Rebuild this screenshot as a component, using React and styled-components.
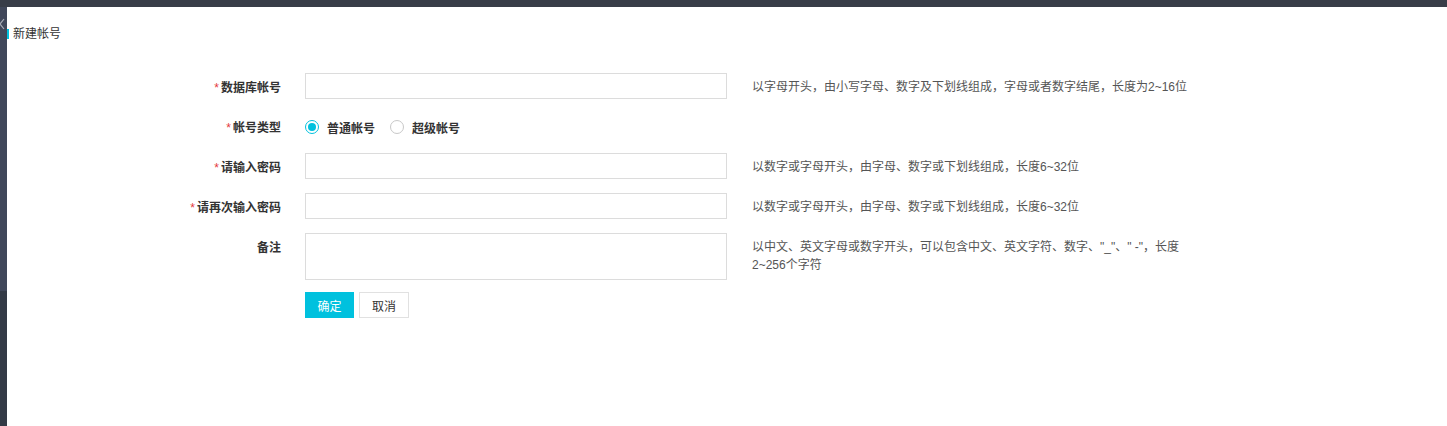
import React from "react";
import styled, { createGlobalStyle } from "styled-components";

const Global = createGlobalStyle`
  html, body { margin: 0; padding: 0; background: #fff; }
  body {
    font-family: "Liberation Sans", "Noto Sans CJK SC", sans-serif;
    font-size: 12px;
    color: #333;
  }
  * { box-sizing: border-box; }
`;

const Page = styled.div`
  width: 1447px;
  height: 426px;
  display: flex;
  flex-direction: column;
  overflow: hidden;
`;

const TopBar = styled.div`
  height: 7px;
  flex: none;
  background: #383d48;
`;

const Body = styled.div`
  flex: 1;
  display: flex;
`;

const Sidebar = styled.div`
  width: 7px;
  flex: none;
  display: flex;
  flex-direction: column;
  overflow: hidden;
`;

const SideUpper = styled.div`
  height: 284px;
  background: #40475a;
  position: relative;
  overflow: hidden;
`;

const SideLower = styled.div`
  flex: 1;
  background: #333a46;
`;

const CollapseIcon = styled.svg`
  position: absolute;
  left: -5px;
  top: 11px;
`;

const Main = styled.div`
  flex: 1;
  display: flex;
  flex-direction: column;
`;

const Title = styled.div`
  margin-top: 21px;
  height: 12px;
  display: flex;
  align-items: center;
  gap: 4px;
  font-size: 12px;
  line-height: 12px;
  color: #333;
`;

const TitleBar = styled.span`
  width: 2px;
  height: 10px;
  background: #00c1de;
`;

const Form = styled.div`
  margin-top: 33px;
  display: flex;
  flex-direction: column;
  gap: 14px;
`;

const Row = styled.div`
  display: flex;
  align-items: flex-start;
`;

const Label = styled.div`
  width: 274px;
  height: 26px;
  flex: none;
  text-align: right;
  font-weight: 700;
  color: #333;
  font-size: 12px;
  line-height: 22px;
  padding-top: 4px;
`;

const Star = styled.span`
  color: #e4393c;
  font-weight: 400;
  margin-right: 2px;
  font-size: 12px;
`;

const Control = styled.div`
  width: 422px;
  margin-left: 24px;
  flex: none;
  display: flex;
  align-items: center;
  min-height: 26px;
`;

const Input = styled.input`
  width: 100%;
  height: 26px;
  border: 1px solid #dcdcdc;
  outline: none;
  padding: 0 8px;
  font-size: 12px;
  font-family: inherit;
`;

const TextArea = styled.textarea`
  width: 100%;
  height: 47px;
  border: 1px solid #dcdcdc;
  outline: none;
  resize: none;
  padding: 4px 8px;
  font-size: 12px;
  font-family: inherit;
  display: block;
`;

const Help = styled.div`
  margin-left: 25px;
  width: 440px;
  padding-top: 5px;
  font-size: 12px;
  line-height: 18px;
  color: #555;
`;

const RadioGroup = styled.div`
  display: flex;
  align-items: center;
  height: 26px;
  padding-top: 2px;
`;

const RadioItem = styled.label`
  display: flex;
  align-items: center;
  gap: 8px;
  margin-right: 15px;
  font-weight: 700;
  color: #333;
  font-size: 12px;
`;

const RadioCircle = styled.span`
  width: 14px;
  height: 14px;
  margin-top: -1px;
  border-radius: 50%;
  border: 1px solid ${(p) => (p.$checked ? "#00c1de" : "#c8c8c8")};
  background: #fff;
  display: flex;
  align-items: center;
  justify-content: center;
  &::after {
    content: "";
    width: 8px;
    height: 8px;
    border-radius: 50%;
    background: ${(p) => (p.$checked ? "#00c1de" : "transparent")};
  }
`;

const Buttons = styled.div`
  display: flex;
  gap: 5px;
  margin-left: 298px;
  margin-top: -2px;
`;

const Button = styled.button`
  height: 26px;
  padding: 1px 0 0;
  width: ${(p) => (p.$primary ? 49 : 50)}px;
  border: 1px solid ${(p) => (p.$primary ? "#00c1de" : "#e1e1e1")};
  background: ${(p) => (p.$primary ? "#00c1de" : "#fff")};
  color: ${(p) => (p.$primary ? "#fff" : "#333")};
  font-size: 12px;
  font-family: inherit;
  cursor: pointer;
`;

const rows = [
  {
    label: "数据库帐号",
    help: "以字母开头，由小写字母、数字及下划线组成，字母或者数字结尾，长度为2~16位",
  },
  {
    label: "请输入密码",
    help: "以数字或字母开头，由字母、数字或下划线组成，长度6~32位",
  },
  {
    label: "请再次输入密码",
    help: "以数字或字母开头，由字母、数字或下划线组成，长度6~32位",
  },
];

export default function App() {
  return (
    <Page>
      <Global />
      <TopBar />
      <Body>
        <Sidebar>
          <SideUpper>
            <CollapseIcon width="10" height="12" viewBox="0 0 10 12">
              <path d="M1 1 L9 11 M9 1 L1 11" stroke="#a9adb8" strokeWidth="1.2" fill="none" />
            </CollapseIcon>
          </SideUpper>
          <SideLower />
        </Sidebar>
        <Main>
          <Title>
            <TitleBar />
            新建帐号
          </Title>
          <Form>
            <Row>
              <Label>
                <Star>*</Star>
                {rows[0].label}
              </Label>
              <Control>
                <Input />
              </Control>
              <Help>{rows[0].help}</Help>
            </Row>
            <Row>
              <Label>
                <Star>*</Star>帐号类型
              </Label>
              <Control>
                <RadioGroup>
                  <RadioItem>
                    <RadioCircle $checked />
                    普通帐号
                  </RadioItem>
                  <RadioItem>
                    <RadioCircle />
                    超级帐号
                  </RadioItem>
                </RadioGroup>
              </Control>
            </Row>
            {rows.slice(1).map((r) => (
              <Row key={r.label}>
                <Label>
                  <Star>*</Star>
                  {r.label}
                </Label>
                <Control>
                  <Input type="password" />
                </Control>
                <Help>{r.help}</Help>
              </Row>
            ))}
            <Row>
              <Label>备注</Label>
              <Control>
                <TextArea />
              </Control>
              <Help>
                以中文、英文字母或数字开头，可以包含中文、英文字符、数字、"_"、" -"，长度2~256个字符
              </Help>
            </Row>
            <Buttons>
              <Button $primary>确定</Button>
              <Button>取消</Button>
            </Buttons>
          </Form>
        </Main>
      </Body>
    </Page>
  );
}
